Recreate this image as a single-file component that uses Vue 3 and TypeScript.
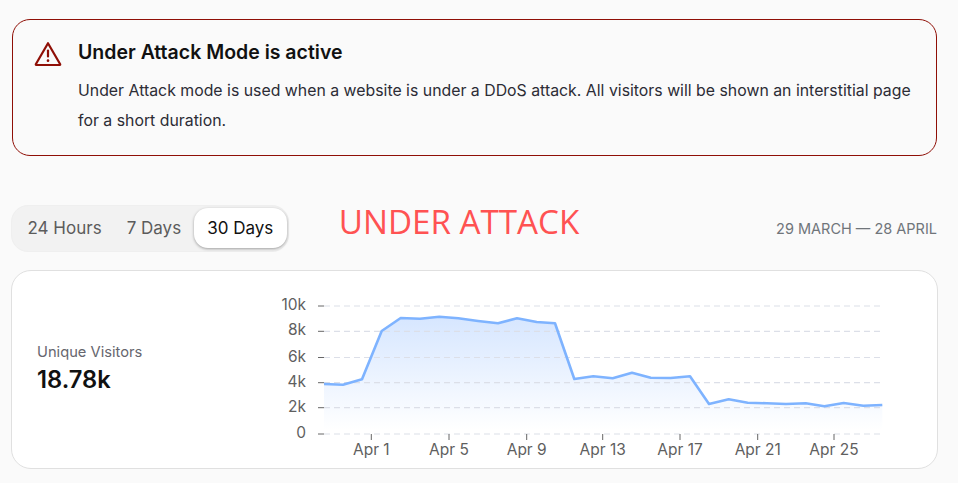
<script setup lang="ts">
import { computed, ref } from "vue";

const ranges = ["24 Hours", "7 Days", "30 Days"];
const active = ref("30 Days");

// chart coordinates, measured from the svg's top left corner
const line: [number, number][] = [
  [54, 94], [73, 94.7], [92, 89.3], [111.7, 41], [130.7, 28], [150, 28.7],
  [169.3, 26.7], [188.3, 28.3], [208, 31], [228, 33.3], [247, 28.3], [266.7, 32],
  [285, 33.3], [304.3, 89], [323.3, 86.3], [342.7, 88.3], [362, 82.7], [380.7, 87.7],
  [400.7, 88], [420, 86.3], [439, 114], [458.7, 109.3], [477.7, 112.7], [496.7, 113.3],
  [516, 114], [535.7, 113.3], [554.3, 116.3], [573.7, 113], [593.3, 115.7], [612.3, 115],
];
const yTicks = [
  { label: "10k", y: 16 },
  { label: "8k", y: 41.3 },
  { label: "6k", y: 67.5 },
  { label: "4k", y: 92.7 },
  { label: "2k", y: 117.7 },
  { label: "0", y: 144 },
];
const xTicks = [
  { label: "Apr 1", x: 101.3 },
  { label: "Apr 5", x: 179 },
  { label: "Apr 9", x: 256.7 },
  { label: "Apr 13", x: 332.7 },
  { label: "Apr 17", x: 410 },
  { label: "Apr 21", x: 487.7 },
  { label: "Apr 25", x: 564 },
];

const linePoints = computed(() => line.map((p) => p.join(",")).join(" "));
const areaPoints = computed(() => `54,140 ${linePoints.value} 612.3,140`);
</script>

<template>
  <main class="page">
    <section class="alert">
      <svg class="alert__icon" viewBox="0 0 28 26" width="28" height="26" fill="none" stroke="#8f0f06" stroke-width="2.2" stroke-linejoin="round" stroke-linecap="round">
        <path d="M14 2.2 L26.2 23.2 Q26.4 24 25.4 24 L2.6 24 Q1.6 24 1.8 23.2 Z" />
        <path d="M14 9.5 V15.5" />
        <path d="M14 19.6 V19.8" stroke-width="2.6" />
      </svg>
      <div>
        <h2 class="alert__title">Under Attack Mode is active</h2>
        <p class="alert__text">
          Under Attack mode is used when a website is under a DDoS attack. All visitors will be shown an interstitial page for a short duration.
        </p>
      </div>
    </section>

    <div class="toolbar">
      <div class="tabs">
        <button
          v-for="range in ranges"
          :key="range"
          class="tabs__item"
          :class="{ 'tabs__item--active': range === active }"
          @click="active = range"
        >
          {{ range }}
        </button>
      </div>
      <div class="toolbar__status">UNDER ATTACK</div>
      <div class="toolbar__dates">29 MARCH — 28 APRIL</div>
    </div>

    <section class="card">
      <div class="stat">
        <div class="stat__label">Unique Visitors</div>
        <div class="stat__value">18.78k</div>
      </div>
      <svg class="chart" viewBox="0 0 640 178" width="640" height="178">
        <defs>
          <linearGradient id="fade" x1="0" y1="0" x2="0" y2="1">
            <stop offset="0" stop-color="#d6e6ff" />
            <stop offset="1" stop-color="#ffffff" />
          </linearGradient>
        </defs>
        <polygon :points="areaPoints" fill="url(#fade)" />
        <g v-for="t in yTicks" :key="t.label">
          <line x1="54" :y1="t.y" x2="612.3" :y2="t.y" stroke="#dcdfe8" stroke-width="1.2" stroke-dasharray="6 4" />
          <line x1="48" :y1="t.y" x2="54" :y2="t.y" stroke="#666" stroke-width="1" />
          <text x="36" :y="t.y + 4" text-anchor="end" class="chart__label">{{ t.label }}</text>
        </g>
        <g v-for="t in xTicks" :key="t.label">
          <line :x1="t.x" y1="144" :x2="t.x" y2="150" stroke="#666" stroke-width="1" />
          <text :x="t.x" y="165" text-anchor="middle" class="chart__label">{{ t.label }}</text>
        </g>
        <polyline :points="linePoints" fill="none" stroke="#7eb3ff" stroke-width="2.6" stroke-linejoin="round" />
      </svg>
    </section>
  </main>
</template>

<style>
html,
body {
  background: #fafafa;
}
</style>

<style scoped>
.page {
  box-sizing: border-box;
  width: 958px;
  height: 483px;
  padding: 19px 21px 0 12px;
  overflow: hidden;
  font-family: Inter, "Liberation Sans", sans-serif;
}

.alert {
  box-sizing: border-box;
  display: flex;
  gap: 16px;
  height: 137px;
  padding: 21px 20px 0 21px;
  border: 1px solid #8f0f06;
  border-radius: 18px;
}
.alert__icon {
  flex: none;
}
.alert__title {
  margin: 0;
  font-size: 19.5px;
  line-height: 22px;
  font-weight: 600;
  color: #111;
}
.alert__text {
  margin: 13px 0 0;
  font-size: 15.85px;
  line-height: 30px;
  color: #2c2c35;
}

.toolbar {
  display: flex;
  align-items: center;
  margin-top: 48px;
  height: 48px;
}
.tabs {
  box-sizing: border-box;
  display: flex;
  align-items: center;
  height: 47px;
  margin-left: -1px;
  padding: 0 1px 0 3px;
  background: #f2f2f2;
  border: 1px solid #efefef;
  border-radius: 17px;
}
.tabs__item {
  height: 40px;
  padding: 0 12.5px;
  border: none;
  border-radius: 14px;
  background: none;
  font: inherit;
  font-size: 17px;
  color: #5c5c5c;
}
.tabs__item--active {
  padding: 0 13.5px;
  background: #fff;
  color: #111;
  box-shadow: 0 1px 3px rgba(0, 0, 0, 0.35);
}
.toolbar__status {
  margin: 0 0 14px 50px;
  font-family: "Open Sans", sans-serif;
  font-size: 33.2px;
  color: #ff5252;
}
.toolbar__dates {
  margin-left: auto;
  font-size: 14.5px;
  color: #70757a;
}

.card {
  box-sizing: border-box;
  display: flex;
  justify-content: space-between;
  height: 199px;
  margin: 18px -1px 0;
  padding: 19px 27px 0 25px;
  background: #fff;
  border: 1px solid #e0e0e0;
  border-radius: 20px;
}
.stat {
  margin-top: 52px;
}
.stat__label {
  font-size: 14.7px;
  line-height: 20px;
  color: #66666e;
}
.stat__value {
  font-size: 23.7px;
  line-height: 35px;
  font-weight: 600;
  color: #111;
}
.chart {
  flex: none;
}
.chart__label {
  font-size: 15.5px;
  fill: #5f5f5f;
}
</style>
